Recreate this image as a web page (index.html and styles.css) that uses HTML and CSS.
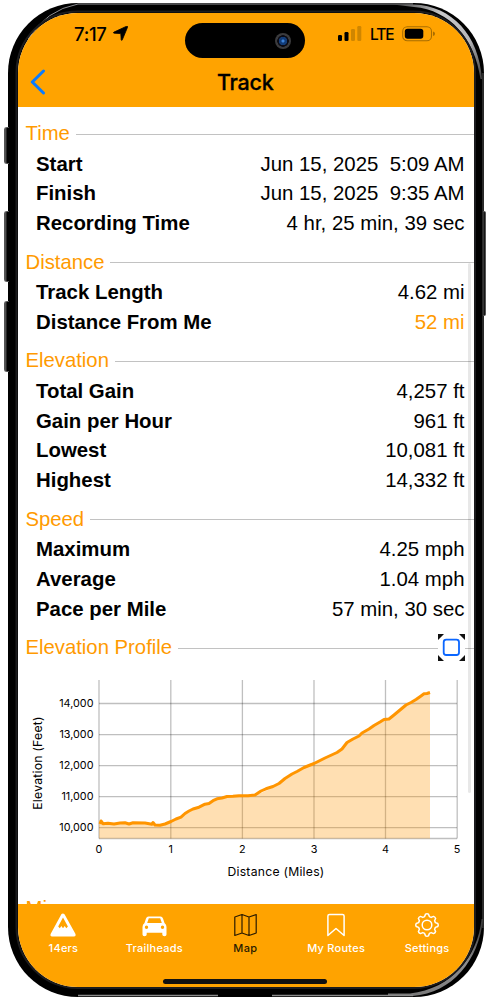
FILE: index.html
```html
<!DOCTYPE html>
<html lang="en">
<head>
<meta charset="utf-8">
<title>Track</title>
<link rel="stylesheet" href="styles.css">
</head>
<body>
<div class="phone">
  <i class="side action"></i><i class="side vol-up"></i><i class="side vol-down"></i><i class="side power"></i>
  <svg class="rim" width="476" height="994" viewBox="0 0 476 994" fill="none">
    <defs>
      <linearGradient id="tr" x1="395" y1="0" x2="475" y2="80" gradientUnits="userSpaceOnUse"><stop offset="0" stop-color="#555"/><stop offset=".3" stop-color="#c9c9cb"/><stop offset=".65" stop-color="#b5b5b8"/><stop offset="1" stop-color="#333"/></linearGradient>
      <linearGradient id="br" x1="475" y1="915" x2="400" y2="993" gradientUnits="userSpaceOnUse"><stop offset="0" stop-color="#333"/><stop offset=".4" stop-color="#8c8c8e"/><stop offset="1" stop-color="#777"/></linearGradient>
    </defs>
    <path d="M20 36Q38 7 70 1H405" stroke="#8d8d91" stroke-width="1"/>
    <path d="M385 1.500H406C444 3 471 32 474 76L472.500 76C467 36 442 7 406 4Z" fill="url(#tr)"/>
    <path d="M473.500 916C470 953 444 986 402 990.500H380V993H405C444 990 471 957 475 916Z" fill="url(#br)"/>
    <path d="M70 992.500H210M264 992.500H405" stroke="#8b8b8b" stroke-width="1.500"/>
    <path d="M475 70V925" stroke="#555" stroke-width="1"/>
    <rect x="8.500" y="8.500" width="458.500" height="976.500" rx="61" stroke="#1c1c1e" stroke-width="2"/>
  </svg>
  <div class="screen">
    <header class="top">
      <div class="status">
        <div class="clock"><span>7:17</span>
          <svg width="15" height="15" viewBox="0 0 15 15"><path d="M13.700.2Q15 0 14.500 1.300L9.300 13.800Q8.700 15 8.200 13.700L7.800 7.600 1.200 7.200Q-.3 6.900 1 6.100Z" stroke="#000" stroke-width=".8" stroke-linejoin="round"/></svg>
        </div>
        <div class="signal">
          <svg width="24" height="16" viewBox="0 0 24 16"><rect x="0" y="9" width="4" height="6" rx="1.200"/><rect x="6.500" y="6" width="4" height="9" rx="1.200"/><g fill="#cf8600"><rect x="13" y="3" width="4" height="12" rx="1.200"/><rect x="19.300" y="0" width="4" height="15" rx="1.200"/></g></svg>
          <span class="lte">LTE</span>
          <svg width="34" height="16" viewBox="0 0 34 16"><rect x=".7" y=".8" width="28.800" height="14" rx="4.600" fill="none" stroke="#a86d00" stroke-width="1.100"/><rect x="2.800" y="2.800" width="18.500" height="10" rx="2.800"/><path d="M31 5.500Q33 6 33 7.800T31 10.100Z" fill="#a86d00"/></svg>
        </div>
      </div>
      <div class="nav">
        <svg class="back" width="16" height="26" viewBox="0 0 16 26"><path d="M13.500 2 2.300 13 13.500 24" fill="none" stroke="#0a7cff" stroke-width="3" stroke-linecap="round" stroke-linejoin="round"/></svg>
        <h1>Track</h1>
      </div>
      <div class="island"><i class="lens"></i></div>
    </header>
    <main class="content">
      <h2>Time</h2>
      <div class="row"><b>Start</b><span>Jun 15, 2025&nbsp; 5:09 AM</span></div>
      <div class="row"><b>Finish</b><span>Jun 15, 2025&nbsp; 9:35 AM</span></div>
      <div class="row"><b>Recording Time</b><span>4 hr, 25 min, 39 sec</span></div>
      <h2>Distance</h2>
      <div class="row"><b>Track Length</b><span>4.62 mi</span></div>
      <div class="row"><b>Distance From Me</b><span class="accent">52 mi</span></div>
      <h2>Elevation</h2>
      <div class="row"><b>Total Gain</b><span>4,257 ft</span></div>
      <div class="row"><b>Gain per Hour</b><span>961 ft</span></div>
      <div class="row"><b>Lowest</b><span>10,081 ft</span></div>
      <div class="row"><b>Highest</b><span>14,332 ft</span></div>
      <h2>Speed</h2>
      <div class="row"><b>Maximum</b><span>4.25 mph</span></div>
      <div class="row"><b>Average</b><span>1.04 mph</span></div>
      <div class="row"><b>Pace per Mile</b><span>57 min, 30 sec</span></div>
      <h2 class="profile">Elevation Profile
        <svg class="expand" width="27" height="27" viewBox="0 0 27 27"><path d="M0 0H6L0 6ZM21 0H27V6ZM0 21 6 27H0ZM27 21V27H21Z" fill="#111"/><rect x="5.700" y="5.700" width="15.300" height="15.300" rx="2.500" fill="#fff" stroke="#0a66ff" stroke-width="1.800"/></svg>
      </h2>
      <svg class="chart" width="455" height="230" viewBox="18 670 455 230">
        <g stroke="#000" stroke-opacity=".25" stroke-width="1.300">
          <path d="M99 680V838.500M170.800 680V838.500M242.400 680V838.500M314 680V838.500M385.500 680V838.500M457.200 680V838.500"/>
          <path d="M99 703.500H457M99 734.600H457M99 765.700H457M99 796.700H457M99 827.700H457M99 838.500H457"/>
        </g>
        <path d="M99 838.500V823L103 824 115 824 125 823 130 824 150 823 160 825 170.800 821.500 180 817.500 188 811.500 205 804 218 798.500 230 796 255 795.500 268 790 278 785 286 778 300 770 314 763.500 338 751.500 347 742 359 735.500 372 726.500 384 719 389 718.500 402 706.500 414 700 424 693.500 430 693V838.500Z" fill="#ff9500" fill-opacity=".3"/>
        <path d="M100 824 101 821 103 823.700 108 823.300 114 824 120 823 125 822.800 129 824 133 822.800 145 823 152 824.200 153 822.500 155 825 160 825.300 165 824 171 821.500 176 819 181 817.200 185 813.500 189 811 193 809 199 807.200 205 804.200 209 803.500 213 800.700 217 798.800 222 798 227 796.500 233 796.300 239 795.700 248 795.700 255 795 261 791 266 788.800 273 786.500 279 783.500 285 778.500 292 774 297 771.500 304 767.500 314 763.500 325 758 337 752.500 342 749 347 742.500 353 739 359 736 362 733 369 729 374 725.500 380 722 384 719.500 389 719 394 715 400 710 406 705 411 702.500 416 699.500 421 696 424 693.800 427 693.500 430 692.500" fill="none" stroke="#ff9500" stroke-width="3" stroke-linejoin="round"/>
        <g class="ylab" text-anchor="end"><text x="93.500" y="707">14,000</text><text x="93.500" y="738">13,000</text><text x="93.500" y="769">12,000</text><text x="93.500" y="800">11,000</text><text x="93.500" y="831">10,000</text></g>
        <g class="xlab" text-anchor="middle"><text x="99" y="853">0</text><text x="170.800" y="853">1</text><text x="242.400" y="853">2</text><text x="314" y="853">3</text><text x="385.500" y="853">4</text><text x="457" y="853">5</text></g>
        <g class="axis" text-anchor="middle"><text x="276" y="876">Distance (Miles)</text><text transform="translate(42 763) rotate(-90)">Elevation (Feet)</text></g>
      </svg>
      <h2 class="next">Mi</h2>
      <i class="scrollbar"></i>
    </main>
    <nav class="tabs">
      <div class="tab"><svg width="26" height="24" viewBox="0 0 26 24"><path fill="#fff" fill-rule="evenodd" d="M11.500 1Q13 0 14.500 1.200L25.500 21Q26 23.500 24 23.500H2Q0 23.500.6 21ZM13 4.600 8.200 13.500 9.800 15.300 11.400 12.900 13 15.300 14.700 12.900 16.300 15.300 17.900 13.500Z"/></svg><span>14ers</span></div>
      <div class="tab"><svg width="25" height="24" viewBox="0 0 25 24"><path fill="#fff" fill-rule="evenodd" d="M6.500 3.500H18.500Q20.300 3.500 21 5.500L22.500 10Q24.500 11.500 24.500 14V21.500Q24.500 23.200 22.500 23.200 20.300 23.200 20.300 21.500V19.800H4.700V21.500Q4.700 23.200 2.500 23.200.5 23.200.5 21.500V14Q.5 11.500 2.500 10L4 5.500Q4.700 3.500 6.500 3.500ZM6.800 5.300 5.200 9.900H19.800L18.200 5.300ZM4.500 12.500A1.700 1.700 0 1 0 4.500 15.900A1.700 1.700 0 1 0 4.500 12.500ZM20.500 12.500A1.700 1.700 0 1 0 20.500 15.900A1.700 1.700 0 1 0 20.500 12.500Z"/></svg><span>Trailheads</span></div>
      <div class="tab active"><svg width="23" height="24" viewBox="0 0 23 24"><path fill="none" stroke="#2a1b00" stroke-width="1.200" stroke-linejoin="round" d="M.8 4 8 1.500 15 4 22.200 1.500V20L15 22.500 8 20 .8 22.500ZM8 1.500V20M15 4V22.500"/></svg><span>Map</span></div>
      <div class="tab"><svg width="18" height="24" viewBox="0 0 18 24"><path fill="none" stroke="#fff" stroke-width="1.500" stroke-linejoin="round" d="M.9 3Q.9 1.400 2.500 1.400H15.500Q17.100 1.400 17.100 3V22.500L9 15.500.9 22.500Z"/></svg><span>My Routes</span></div>
      <div class="tab"><svg width="24" height="24" viewBox="-12 -12 24 24"><g fill="none" stroke="#fff" stroke-width="1.500" stroke-linejoin="round"><circle r="4.800"/><path d="M-1.500-10.800Q0-11.600 1.500-10.800L2.400-8.400 4.200-7.600 6.500-8.600Q8.100-8.100 8.600-6.500L7.600-4.200 8.400-2.400 10.800-1.500Q11.600 0 10.800 1.500L8.400 2.400 7.600 4.200 8.600 6.500Q8.100 8.100 6.500 8.600L4.200 7.600 2.400 8.400 1.500 10.800Q0 11.600-1.500 10.800L-2.400 8.400-4.200 7.600-6.500 8.600Q-8.100 8.100-8.600 6.500L-7.600 4.200-8.400 2.400-10.800 1.500Q-11.600 0-10.800-1.500L-8.400-2.400-7.600-4.200-8.600-6.500Q-8.100-8.100-6.500-8.600L-4.200-7.600-2.400-8.400Z"/></g></svg><span>Settings</span></div>
      <i class="home"></i>
    </nav>
  </div>
</div>
</body>
</html>
```
FILE: styles.css
```css
* { box-sizing: border-box; }
html, body { height: 1000px; overflow: hidden; }
body { margin: 0; padding: 3px 0 0 8px; background: #fff; color: #000; }
svg { display: block; flex: none; }
.phone { position: relative; width: 475.5px; height: 993.5px; padding: 10px; border-radius: 70px; background: #000; }
.rim { position: absolute; left: 0; top: 0; }
.side { position: absolute; background: #161616; border: 1px solid #555; }
.action, .vol-up, .vol-down { left: -4px; width: 5px; border-right: 0; border-radius: 3px 0 0 3px; background: linear-gradient(90deg, #666, #000 60%); }
.action { top: 124px; height: 37px; }
.vol-up { top: 208px; height: 71px; }
.vol-down { top: 298px; height: 71px; }
.power { right: -2.5px; width: 3px; top: 208px; height: 105px; border-left: 0; border-radius: 0 2px 2px 0; }
.screen { position: relative; display: flex; flex-direction: column; width: 455.5px; height: 973.5px; border-radius: 60px; overflow: hidden; background: #fff; }
.top { position: relative; flex: none; height: 94px; background: #ffa300; font-family: Inter, sans-serif; }
.status { display: flex; justify-content: space-between; height: 42px; padding: 0 38px 0 56px; }
.clock { display: flex; align-items: center; gap: 6px; font-size: 18.5px; font-weight: 500; letter-spacing: -.3px; }
.clock svg { margin-top: -1px; }
.signal { display: flex; align-items: center; gap: 8px; }
.signal svg { margin-top: -1px; }
.lte { font-size: 15.5px; font-weight: 500; letter-spacing: -1.1px; }
.nav { display: flex; align-items: center; justify-content: center; height: 53px; }
.nav h1 { margin: 0 1px 0 0; font-size: 21.5px; font-weight: 500; letter-spacing: -.2px; -webkit-text-stroke: .3px #000; }
.back { position: absolute; left: 12px; top: 56px; }
.island { position: absolute; left: 167px; top: 10px; width: 120px; height: 35px; border-radius: 18px; background: #000; }
.lens { position: absolute; right: 14px; top: 10px; width: 16px; height: 16px; border-radius: 50%; background: radial-gradient(circle, #3d83d8 0 1px, #123c78 2px 4px, #0b0b14 4.5px 5.5px, #3b3b3d 6px); }
.content { position: relative; flex: 1; min-height: 0; overflow: hidden; padding-top: 12px; font: 20.4px/29.7px "Liberation Sans", Arial, sans-serif; }
.content h2 { display: flex; align-items: center; height: 29.7px; margin: 8.9px 0 .9px; padding-left: 7.5px; font-size: 20.3px; font-weight: 400; color: #ff9a00; white-space: nowrap; }
.content h2:first-child { margin-top: 0; }
.content h2::after { content: ""; flex: 1; height: 1px; margin: 1px 0 0 6px; background: #c2c2c2; }
.row { display: flex; justify-content: space-between; height: 29.7px; padding: 0 9px 0 18px; }
.row .accent { color: #ff9a00; }
.profile { position: relative; }
.expand { position: absolute; right: 9px; top: 1px; background: #fff; }
.chart { margin-top: 7px; font-family: Inter, sans-serif; }
.ylab { font-size: 10.8px; }
.xlab { font-size: 10.8px; }
.axis { font-size: 12.2px; letter-spacing: .25px; }
.content .next { margin-top: -6px; }
.next::after { visibility: hidden; }
.scrollbar { position: absolute; right: 3px; top: 156px; width: 3px; height: 530px; border-radius: 2px; background: rgba(0,0,0,.09); }
.tabs { position: relative; display: flex; flex: none; height: 82.5px; padding-right: 1px; background: #ffa300; color: #fff; font: 500 11px/14px Inter, sans-serif; letter-spacing: .25px; }
.tab { flex: 1; display: flex; flex-direction: column; align-items: center; gap: 4px; padding-top: 9px; }
.tab.active { color: #2a1b00; }
.home { position: absolute; left: 145px; bottom: 3px; width: 164px; height: 5px; border-radius: 3px; background: #111; }
```
